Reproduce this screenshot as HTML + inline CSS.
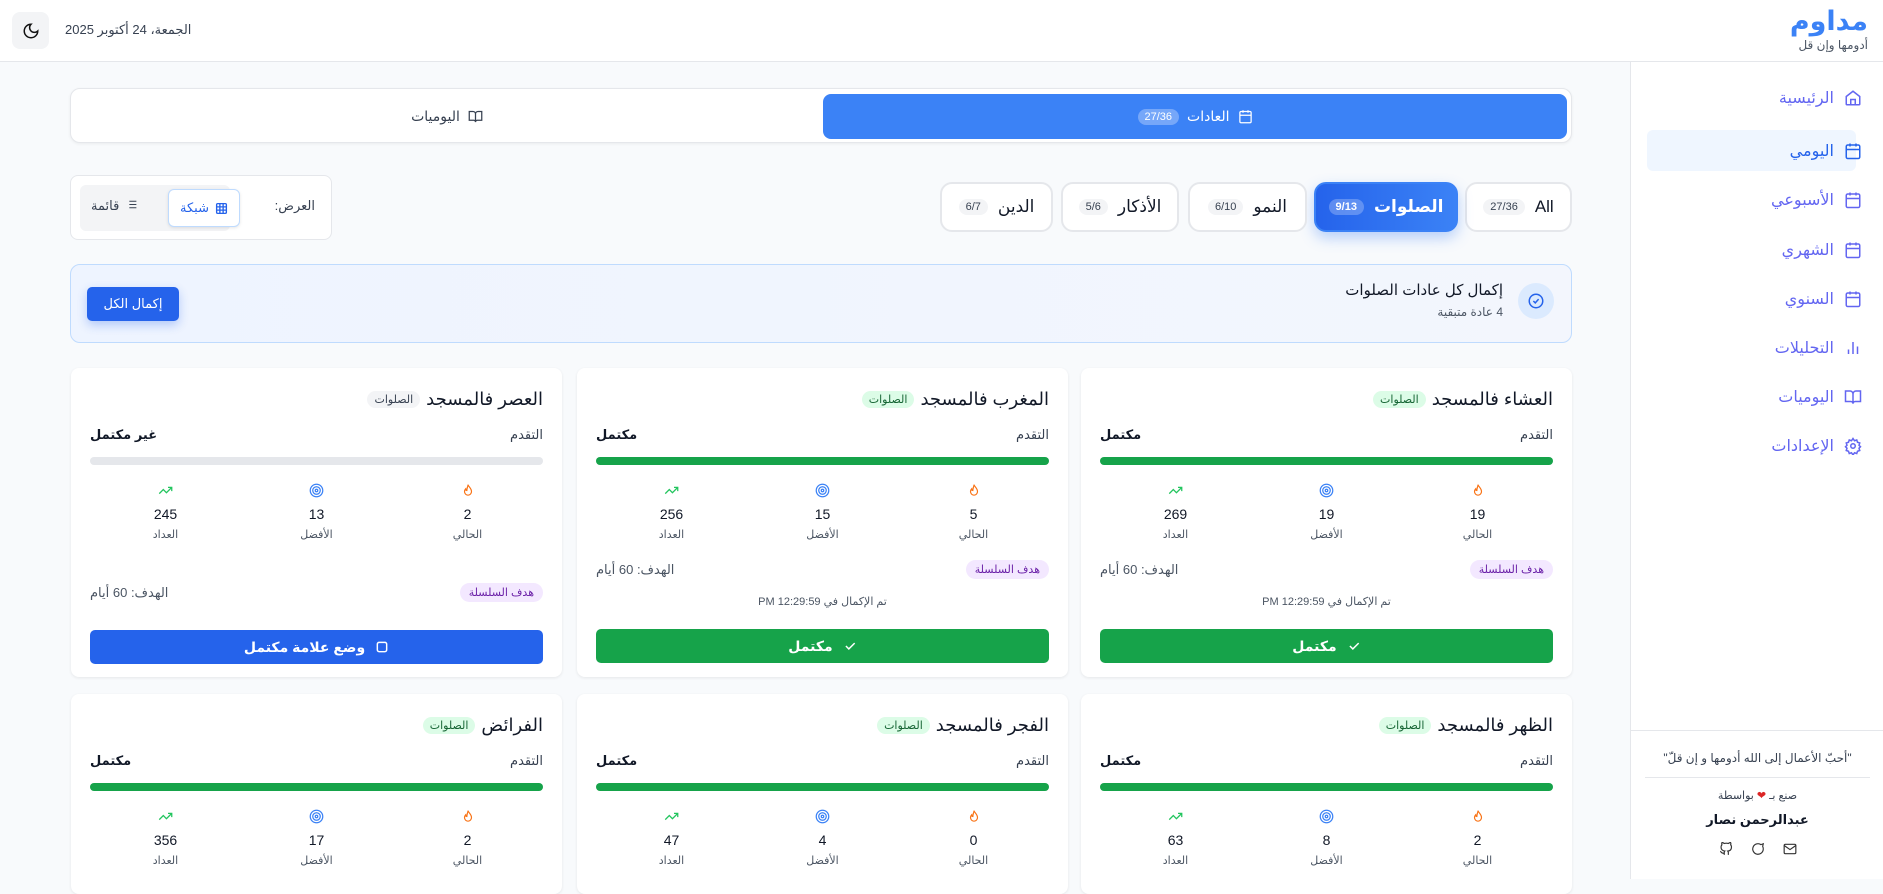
<!DOCTYPE html>
<html lang="ar" dir="rtl"><head><meta charset="utf-8">
<style>
*{box-sizing:border-box;margin:0;padding:0}
body{width:1883px;height:879px;overflow:hidden;background:#f8fafc;font-family:"Liberation Sans","DejaVu Sans",sans-serif;color:#111827;position:relative}
.abs{position:absolute}
.header{left:0;top:0;width:1883px;height:62px;background:#fff;border-bottom:1px solid #e5e7eb}
.logo{right:15px;top:6px;font-size:27px;font-weight:bold;color:#3b82f6}
.sub{right:15px;top:38px;font-size:12px;color:#4b5563}
.moon{left:12px;top:12px;width:37px;height:37px;border-radius:8px;background:#f3f4f6;display:flex;align-items:center;justify-content:center}
.date{left:65px;top:22px;font-size:13px;color:#374151}
.side{left:1630px;top:62px;width:253px;height:817px;background:#fff;border-left:1px solid #e5e7eb}
.nav{position:absolute;right:21px;display:flex;align-items:center;gap:10px;font-size:16px;color:#6366f1;height:30px}
.nav.act{color:#2563eb}
.navbg{left:16px;top:68px;width:209px;height:41px;background:#eff6ff;border-radius:6px}
.foot{left:0;top:668px;width:253px;border-top:1px solid #e5e7eb}
.tabs{left:70px;top:88px;width:1502px;height:55px;background:#fff;border:1px solid #e5e7eb;border-radius:10px;box-shadow:0 1px 3px rgba(0,0,0,.06)}
.tab1{right:4px;top:5px;width:744px;height:45px;background:#3b82f6;border-radius:8px;color:#fff;display:flex;align-items:center;justify-content:center;gap:8px;font-size:14px}
.badge{font-size:11px;padding:2px 7px;border-radius:10px;background:#f3f4f6;color:#374151}
.tab1 .badge{background:rgba(255,255,255,.3);color:#fff}
.pill{top:182px;height:50px;background:#fff;border:2px solid #e5e7eb;border-radius:12px;display:flex;align-items:center;justify-content:center;gap:10px;font-size:17px}
.pill.act{border-color:#3b82f6;color:#fff;box-shadow:0 6px 14px rgba(59,130,246,.35);font-weight:bold;background:linear-gradient(90deg,#2563eb,#3b82f6)}
.pill.act .badge{background:rgba(255,255,255,.25);color:#fff}
.view{left:70px;top:175px;width:262px;height:65px;background:#fff;border:1px solid #e5e7eb;border-radius:8px}
.banner{left:70px;top:264px;width:1502px;height:79px;background:linear-gradient(90deg,#eef4ff,#f3f6fd);border:1px solid #bfdbfe;border-radius:10px}
.card{width:491px;background:#fff;border-radius:8px;box-shadow:0 1px 3px rgba(0,0,0,.08);padding:0 19px}
.ttl{display:flex;align-items:center;gap:6px;margin-top:19px;height:24px;font-size:18px}
.tag{font-size:11px;background:#dcfce7;color:#166534;padding:2px 7px;border-radius:10px}
.tag.g{background:#f3f4f6;color:#374151}
.pl{display:flex;justify-content:space-between;margin-top:16px;font-size:13px;color:#374151}
.pl b{color:#111827;font-weight:600}
.bar{height:8px;border-radius:4px;background:#16a34a;margin-top:14px}
.bar.e{background:#e5e7eb}
.stats{display:flex;margin-top:18px}
.st{flex:1;text-align:center}
.st .n{font-size:14px;margin-top:3px;color:#111827}
.st .l{font-size:11px;color:#4b5563;margin-top:6px}
.goal{display:flex;justify-content:space-between;align-items:center;margin-top:19px;font-size:13px;color:#4b5563}
.gb{font-size:11px;background:#f3e8ff;color:#6b21a8;padding:3px 9px;border-radius:10px}
.done{text-align:center;font-size:11px;color:#4b5563;margin-top:16px}
.btn{height:34px;border-radius:5px;background:#16a34a;color:#fff;display:flex;align-items:center;justify-content:center;gap:10px;font-size:14px;font-weight:600;margin-top:21px}
.btn.b{background:#2563eb}
</style></head><body>
<div class="abs header"></div>
<div class="abs logo">مداوم</div>
<div class="abs sub">أدومها وإن قل</div>
<div class="abs moon"><svg width="18" height="18" viewBox="0 0 24 24" fill="none" stroke="#111" stroke-width="2"><path d="M12 3a6 6 0 0 0 9 9 9 9 0 1 1-9-9z"/></svg></div>
<div class="abs date">الجمعة، 24 أكتوبر 2025</div>

<div class="abs side">
<div class="abs navbg"></div>
<div class="nav" style="top:21px"><svg width="18" height="18" viewBox="0 0 24 24" fill="none" stroke="currentColor" stroke-width="2"><path d="M3 10l9-7 9 7v10a1 1 0 0 1-1 1H4a1 1 0 0 1-1-1z"/><path d="M9 21v-7h6v7"/></svg>الرئيسية</div>
<div class="nav act" style="top:74px"><svg width="18" height="18" viewBox="0 0 24 24" fill="none" stroke="currentColor" stroke-width="2"><rect x="3" y="4" width="18" height="18" rx="2"/><path d="M16 2v4M8 2v4M3 10h18"/></svg>اليومي</div>
<div class="nav" style="top:123px"><svg width="18" height="18" viewBox="0 0 24 24" fill="none" stroke="currentColor" stroke-width="2"><rect x="3" y="4" width="18" height="18" rx="2"/><path d="M16 2v4M8 2v4M3 10h18"/></svg>الأسبوعي</div>
<div class="nav" style="top:173px"><svg width="18" height="18" viewBox="0 0 24 24" fill="none" stroke="currentColor" stroke-width="2"><rect x="3" y="4" width="18" height="18" rx="2"/><path d="M16 2v4M8 2v4M3 10h18"/></svg>الشهري</div>
<div class="nav" style="top:222px"><svg width="18" height="18" viewBox="0 0 24 24" fill="none" stroke="currentColor" stroke-width="2"><rect x="3" y="4" width="18" height="18" rx="2"/><path d="M16 2v4M8 2v4M3 10h18"/></svg>السنوي</div>
<div class="nav" style="top:271px"><svg width="18" height="18" viewBox="0 0 24 24" fill="none" stroke="currentColor" stroke-width="2"><path d="M18 20V10M12 20V4M6 20v-6"/></svg>التحليلات</div>
<div class="nav" style="top:320px"><svg width="18" height="18" viewBox="0 0 24 24" fill="none" stroke="currentColor" stroke-width="2"><path d="M2 4h6a4 4 0 0 1 4 4v13a3 3 0 0 0-3-3H2zM22 4h-6a4 4 0 0 0-4 4v13a3 3 0 0 1 3-3h7z"/></svg>اليوميات</div>
<div class="nav" style="top:369px"><svg width="18" height="18" viewBox="0 0 24 24" fill="none" stroke="currentColor" stroke-width="2"><circle cx="12" cy="12" r="3"/><path d="M12 2l2 3 3-1 1 3 3 1-1 3 2 2-2 2 1 3-3 1-1 3-3-1-2 3-2-3-3 1-1-3-3-1 1-3-2-2 2-2-1-3 3-1 1-3 3 1z"/></svg>الإعدادات</div>
<div class="abs foot">
<div style="text-align:center;font-size:12px;color:#374151;margin-top:20px">"أحبّ الأعمال إلى الله أدومها و إن قلّ"</div>
<div style="margin:12px 14px 0;border-top:1px solid #e5e7eb"></div>
<div style="text-align:center;font-size:11px;color:#374151;margin-top:11px">صنع بـ <span style="color:#dc2626">❤</span> بواسطة</div>
<div style="text-align:center;font-size:13px;font-weight:bold;margin-top:10px">عبدالرحمن نصار</div>
<div style="display:flex;justify-content:center;gap:18px;margin-top:14px">
<svg width="14" height="14" viewBox="0 0 24 24" fill="none" stroke="#333" stroke-width="2"><rect x="2" y="4" width="20" height="16" rx="2"/><path d="M2 6l10 7 10-7"/></svg>
<svg width="14" height="14" viewBox="0 0 24 24" fill="none" stroke="#333" stroke-width="2"><path d="M21 12a9 9 0 1 1-4-7.5L21 3l-1 4.5A9 9 0 0 1 21 12z"/></svg>
<svg width="14" height="14" viewBox="0 0 24 24" fill="none" stroke="#333" stroke-width="2"><path d="M9 19c-5 1.5-5-2.5-7-3m14 6v-3.9a3.4 3.4 0 0 0-1-2.6c3.1-.3 6.4-1.5 6.4-7A5.4 5.4 0 0 0 20 4.8 5 5 0 0 0 19.9 1S18.7.7 16 2.5a13.4 13.4 0 0 0-7 0C6.3.7 5.1 1 5.1 1A5 5 0 0 0 5 4.8a5.4 5.4 0 0 0-1.5 3.7c0 5.4 3.3 6.6 6.4 7A3.4 3.4 0 0 0 9 18.1V22"/></svg>
</div></div>
</div>

<div class="abs tabs">
<div class="abs tab1"><svg width="15" height="15" viewBox="0 0 24 24" fill="none" stroke="#fff" stroke-width="2"><rect x="3" y="4" width="18" height="18" rx="2"/><path d="M16 2v4M8 2v4M3 10h18"/></svg>العادات<span class="badge">27/36</span></div>
<div class="abs" style="left:4px;top:5px;width:744px;height:45px;display:flex;align-items:center;justify-content:center;gap:8px;font-size:14px;color:#374151"><svg width="15" height="15" viewBox="0 0 24 24" fill="none" stroke="#374151" stroke-width="2"><path d="M2 4h6a4 4 0 0 1 4 4v13a3 3 0 0 0-3-3H2zM22 4h-6a4 4 0 0 0-4 4v13a3 3 0 0 1 3-3h7z"/></svg>اليوميات</div>
</div>

<div class="abs pill" style="left:1465px;width:107px">All<span class="badge">27/36</span></div>
<div class="abs pill act" style="left:1314px;width:144px">الصلوات<span class="badge">9/13</span></div>
<div class="abs pill" style="left:1188px;width:119px">النمو<span class="badge">6/10</span></div>
<div class="abs pill" style="left:1061px;width:118px">الأذكار<span class="badge">5/6</span></div>
<div class="abs pill" style="left:940px;width:113px">الدين<span class="badge">6/7</span></div>

<div class="abs view">
<div class="abs" style="right:16px;top:22px;font-size:13px;color:#374151">العرض:</div>
<div class="abs" style="left:9px;top:9px;width:150px;height:46px;background:#f3f4f6;border-radius:6px"></div>
<div class="abs" style="left:97px;top:13px;width:72px;height:38px;background:#fff;border:1px solid #bfdbfe;border-radius:6px;display:flex;align-items:center;justify-content:center;gap:6px;font-size:13px;color:#2563eb;box-shadow:0 1px 3px rgba(0,0,0,.1)"><svg width="13" height="13" viewBox="0 0 24 24" fill="none" stroke="#2563eb" stroke-width="2.5"><rect x="3" y="3" width="18" height="18" rx="2"/><path d="M3 9h18M3 15h18M9 3v18M15 3v18"/></svg>شبكة</div>
<div class="abs" style="left:20px;top:22px;display:flex;gap:6px;font-size:13px;color:#374151;direction:rtl"><svg width="13" height="13" viewBox="0 0 24 24" fill="none" stroke="#374151" stroke-width="2"><path d="M8 6h13M8 12h13M8 18h13M3 6h.01M3 12h.01M3 18h.01"/></svg>قائمة</div>
</div>

<div class="abs banner">
<div class="abs" style="right:17px;top:18px;width:36px;height:36px;border-radius:18px;background:#dbeafe;display:flex;align-items:center;justify-content:center"><svg width="18" height="18" viewBox="0 0 24 24" fill="none" stroke="#2563eb" stroke-width="2"><circle cx="12" cy="12" r="9"/><path d="M8.5 12l2.5 2.5 4.5-5"/></svg></div>
<div class="abs" style="right:68px;top:16px;font-size:15px">إكمال كل عادات الصلوات</div>
<div class="abs" style="right:68px;top:40px;font-size:12px;color:#4b5563">4 عادة متبقية</div>
<div class="abs" style="left:16px;top:22px;width:92px;height:34px;background:#2563eb;border-radius:5px;color:#fff;font-size:13px;display:flex;align-items:center;justify-content:center;box-shadow:0 4px 10px rgba(37,99,235,.3)">إكمال الكل</div>
</div>

<!-- cards -->
<div class="abs card" style="left:1081px;top:368px;height:309px">
<div class="ttl">العشاء فالمسجد<span class="tag">الصلوات</span></div>
<div class="pl"><span>التقدم</span><b>مكتمل</b></div><div class="bar"></div>
<div class="stats">
<div class="st"><svg width="14" height="15" viewBox="0 0 24 24" fill="none" stroke="#f97316" stroke-width="2"><path d="M12 2c1 4 6 6 6 12a6 6 0 0 1-12 0c0-3 2-5 2-5 0 2 1 3 2 3 0-4 2-7 2-10z"/></svg><div class="n">19</div><div class="l">الحالي</div></div>
<div class="st"><svg width="15" height="15" viewBox="0 0 24 24" fill="none" stroke="#3b82f6" stroke-width="2"><circle cx="12" cy="12" r="10"/><circle cx="12" cy="12" r="6"/><circle cx="12" cy="12" r="2"/></svg><div class="n">19</div><div class="l">الأفضل</div></div>
<div class="st"><svg width="15" height="15" viewBox="0 0 24 24" fill="none" stroke="#22c55e" stroke-width="2"><path d="M22 7l-8.5 8.5-5-5L2 17M16 7h6v6"/></svg><div class="n">269</div><div class="l">العداد</div></div>
</div>
<div class="goal"><span class="gb">هدف السلسلة</span><span>الهدف: 60 أيام</span></div>
<div class="done">تم الإكمال في 12:29:59 PM</div>
<div class="btn"><svg width="14" height="14" viewBox="0 0 24 24" fill="none" stroke="#fff" stroke-width="2.5"><path d="M5 12l5 5L20 7"/></svg>مكتمل</div>
</div>

<div class="abs card" style="left:577px;top:368px;height:309px">
<div class="ttl">المغرب فالمسجد<span class="tag">الصلوات</span></div>
<div class="pl"><span>التقدم</span><b>مكتمل</b></div><div class="bar"></div>
<div class="stats">
<div class="st"><svg width="14" height="15" viewBox="0 0 24 24" fill="none" stroke="#f97316" stroke-width="2"><path d="M12 2c1 4 6 6 6 12a6 6 0 0 1-12 0c0-3 2-5 2-5 0 2 1 3 2 3 0-4 2-7 2-10z"/></svg><div class="n">5</div><div class="l">الحالي</div></div>
<div class="st"><svg width="15" height="15" viewBox="0 0 24 24" fill="none" stroke="#3b82f6" stroke-width="2"><circle cx="12" cy="12" r="10"/><circle cx="12" cy="12" r="6"/><circle cx="12" cy="12" r="2"/></svg><div class="n">15</div><div class="l">الأفضل</div></div>
<div class="st"><svg width="15" height="15" viewBox="0 0 24 24" fill="none" stroke="#22c55e" stroke-width="2"><path d="M22 7l-8.5 8.5-5-5L2 17M16 7h6v6"/></svg><div class="n">256</div><div class="l">العداد</div></div>
</div>
<div class="goal"><span class="gb">هدف السلسلة</span><span>الهدف: 60 أيام</span></div>
<div class="done">تم الإكمال في 12:29:59 PM</div>
<div class="btn"><svg width="14" height="14" viewBox="0 0 24 24" fill="none" stroke="#fff" stroke-width="2.5"><path d="M5 12l5 5L20 7"/></svg>مكتمل</div>
</div>

<div class="abs card" style="left:71px;top:368px;height:309px">
<div class="ttl">العصر فالمسجد<span class="tag g">الصلوات</span></div>
<div class="pl"><span>التقدم</span><b>غير مكتمل</b></div><div class="bar e"></div>
<div class="stats">
<div class="st"><svg width="14" height="15" viewBox="0 0 24 24" fill="none" stroke="#f97316" stroke-width="2"><path d="M12 2c1 4 6 6 6 12a6 6 0 0 1-12 0c0-3 2-5 2-5 0 2 1 3 2 3 0-4 2-7 2-10z"/></svg><div class="n">2</div><div class="l">الحالي</div></div>
<div class="st"><svg width="15" height="15" viewBox="0 0 24 24" fill="none" stroke="#3b82f6" stroke-width="2"><circle cx="12" cy="12" r="10"/><circle cx="12" cy="12" r="6"/><circle cx="12" cy="12" r="2"/></svg><div class="n">13</div><div class="l">الأفضل</div></div>
<div class="st"><svg width="15" height="15" viewBox="0 0 24 24" fill="none" stroke="#22c55e" stroke-width="2"><path d="M22 7l-8.5 8.5-5-5L2 17M16 7h6v6"/></svg><div class="n">245</div><div class="l">العداد</div></div>
</div>
<div class="goal" style="margin-top:42px"><span class="gb">هدف السلسلة</span><span>الهدف: 60 أيام</span></div>
<div class="btn b" style="margin-top:28px"><svg width="14" height="14" viewBox="0 0 24 24" fill="none" stroke="#fff" stroke-width="2.5"><rect x="4" y="4" width="16" height="16" rx="3"/></svg>وضع علامة مكتمل</div>
</div>

<div class="abs card" style="left:1081px;top:694px;height:200px">
<div class="ttl">الظهر فالمسجد<span class="tag">الصلوات</span></div>
<div class="pl"><span>التقدم</span><b>مكتمل</b></div><div class="bar"></div>
<div class="stats">
<div class="st"><svg width="14" height="15" viewBox="0 0 24 24" fill="none" stroke="#f97316" stroke-width="2"><path d="M12 2c1 4 6 6 6 12a6 6 0 0 1-12 0c0-3 2-5 2-5 0 2 1 3 2 3 0-4 2-7 2-10z"/></svg><div class="n">2</div><div class="l">الحالي</div></div>
<div class="st"><svg width="15" height="15" viewBox="0 0 24 24" fill="none" stroke="#3b82f6" stroke-width="2"><circle cx="12" cy="12" r="10"/><circle cx="12" cy="12" r="6"/><circle cx="12" cy="12" r="2"/></svg><div class="n">8</div><div class="l">الأفضل</div></div>
<div class="st"><svg width="15" height="15" viewBox="0 0 24 24" fill="none" stroke="#22c55e" stroke-width="2"><path d="M22 7l-8.5 8.5-5-5L2 17M16 7h6v6"/></svg><div class="n">63</div><div class="l">العداد</div></div>
</div></div>

<div class="abs card" style="left:577px;top:694px;height:200px">
<div class="ttl">الفجر فالمسجد<span class="tag">الصلوات</span></div>
<div class="pl"><span>التقدم</span><b>مكتمل</b></div><div class="bar"></div>
<div class="stats">
<div class="st"><svg width="14" height="15" viewBox="0 0 24 24" fill="none" stroke="#f97316" stroke-width="2"><path d="M12 2c1 4 6 6 6 12a6 6 0 0 1-12 0c0-3 2-5 2-5 0 2 1 3 2 3 0-4 2-7 2-10z"/></svg><div class="n">0</div><div class="l">الحالي</div></div>
<div class="st"><svg width="15" height="15" viewBox="0 0 24 24" fill="none" stroke="#3b82f6" stroke-width="2"><circle cx="12" cy="12" r="10"/><circle cx="12" cy="12" r="6"/><circle cx="12" cy="12" r="2"/></svg><div class="n">4</div><div class="l">الأفضل</div></div>
<div class="st"><svg width="15" height="15" viewBox="0 0 24 24" fill="none" stroke="#22c55e" stroke-width="2"><path d="M22 7l-8.5 8.5-5-5L2 17M16 7h6v6"/></svg><div class="n">47</div><div class="l">العداد</div></div>
</div></div>

<div class="abs card" style="left:71px;top:694px;height:200px">
<div class="ttl">الفرائض<span class="tag">الصلوات</span></div>
<div class="pl"><span>التقدم</span><b>مكتمل</b></div><div class="bar"></div>
<div class="stats">
<div class="st"><svg width="14" height="15" viewBox="0 0 24 24" fill="none" stroke="#f97316" stroke-width="2"><path d="M12 2c1 4 6 6 6 12a6 6 0 0 1-12 0c0-3 2-5 2-5 0 2 1 3 2 3 0-4 2-7 2-10z"/></svg><div class="n">2</div><div class="l">الحالي</div></div>
<div class="st"><svg width="15" height="15" viewBox="0 0 24 24" fill="none" stroke="#3b82f6" stroke-width="2"><circle cx="12" cy="12" r="10"/><circle cx="12" cy="12" r="6"/><circle cx="12" cy="12" r="2"/></svg><div class="n">17</div><div class="l">الأفضل</div></div>
<div class="st"><svg width="15" height="15" viewBox="0 0 24 24" fill="none" stroke="#22c55e" stroke-width="2"><path d="M22 7l-8.5 8.5-5-5L2 17M16 7h6v6"/></svg><div class="n">356</div><div class="l">العداد</div></div>
</div></div>
</body></html>
